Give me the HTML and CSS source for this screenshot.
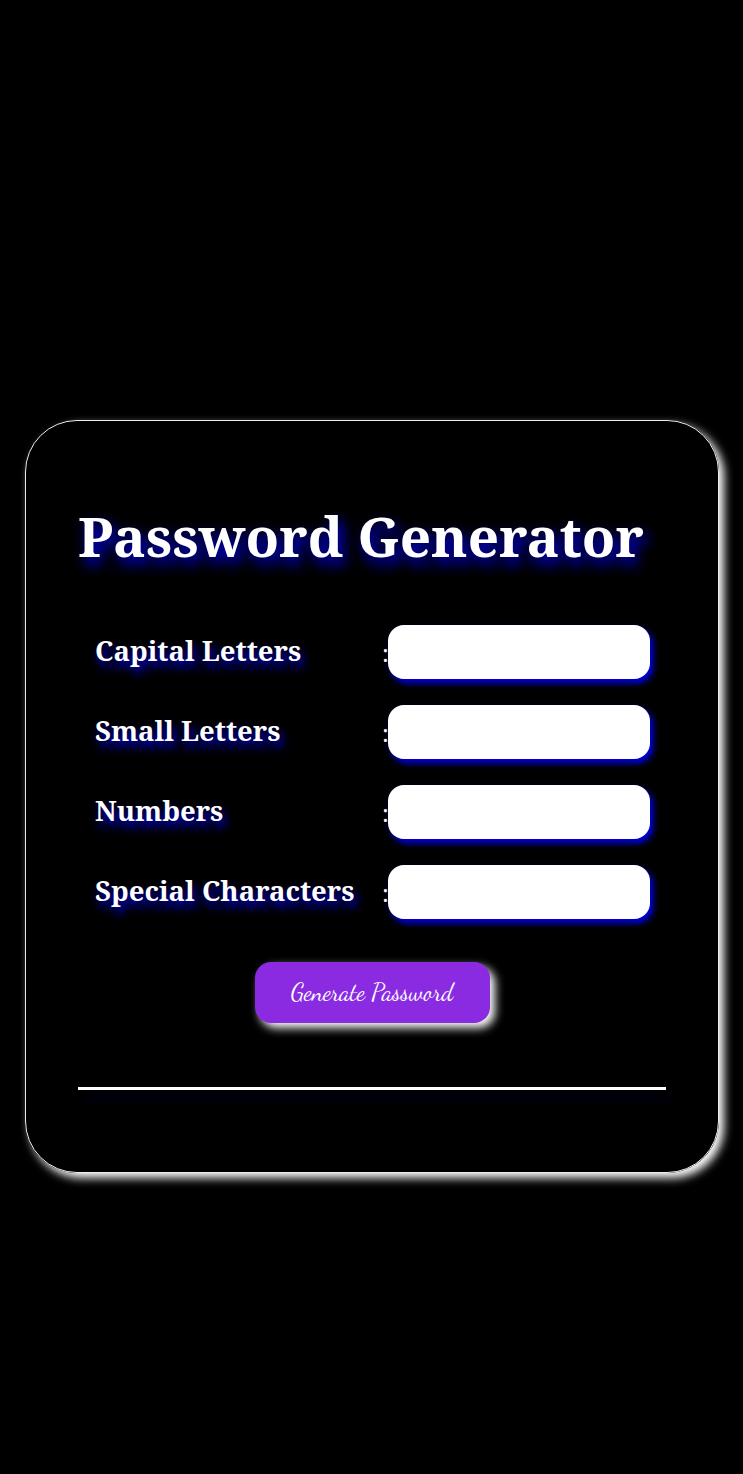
FILE: index.html
```html
<!DOCTYPE html>
<html>
<head>
<meta charset="utf-8">
<link rel="stylesheet" href="styles.css">
</head>
<body>
<div class="page">
  <div class="card">
    <h1 class="title">Password Generator</h1>
    <div class="rows">
      <div class="row"><span class="label">Capital Letters</span><span class="colon">:</span><input class="field" type="text"></div>
      <div class="row"><span class="label">Small Letters</span><span class="colon">:</span><input class="field" type="text"></div>
      <div class="row"><span class="label">Numbers</span><span class="colon">:</span><input class="field" type="text"></div>
      <div class="row"><span class="label">Special Characters</span><span class="colon">:</span><input class="field" type="text"></div>
    </div>
    <div class="btnwrap"><button class="btn">Generate Password</button></div>
    <div class="line"></div>
  </div>
</div>
</body>
</html>
```
FILE: styles.css
```css
html, body {
  margin: 0;
  padding: 0;
  background: #000;
}
.page {
  width: 743px;
  height: 1474px;
  box-sizing: border-box;
  padding: 420px 24px 0 25px;
}
.card {
  width: 694px;
  height: 753px;
  box-sizing: border-box;
  border: 1px solid #eee;
  border-radius: 52px;
  box-shadow: 5px 5px 10px #fff;
  padding: 80px 52px 0 52px;
  font-family: "Noto Serif", "DejaVu Serif", serif;
  color: #fff;
}
.title {
  margin: 0;
  font-size: 54.8px;
  line-height: 70px;
  font-weight: bold;
  white-space: nowrap;
  text-shadow: 4px 7px 14px #0000f0;
}
.rows {
  margin-top: 54px;
  display: flex;
  flex-direction: column;
  gap: 26px;
  padding-left: 17px;
}
.row {
  display: flex;
  align-items: center;
  height: 54px;
}
.label {
  width: 287px;
  font-size: 27.5px;
  font-weight: bold;
  line-height: 36px;
  margin-top: -3px;
  text-shadow: 3px 6px 10px #0000f0;
}
.colon {
  width: 6px;
  font-size: 24px;
}
.field {
  width: 262px;
  height: 54px;
  box-sizing: border-box;
  border: none;
  border-radius: 16px;
  background: #fff;
  box-shadow: 3px 4px 6px #0000f0;
  outline: none;
}
.btnwrap {
  display: flex;
  justify-content: center;
  margin-top: 43px;
}
.btn {
  width: 235px;
  height: 61px;
  border: none;
  border-radius: 16px;
  background: #8a2be2;
  color: #fff;
  font-family: "Dancing Script", cursive;
  font-size: 24px;
  box-shadow: 5px 5px 10px #fff;
}
.line {
  margin-top: 64px;
  width: 588px;
  height: 3px;
  background: #fff;
  box-shadow: 5px 10px 12px #00002e;
}
```
